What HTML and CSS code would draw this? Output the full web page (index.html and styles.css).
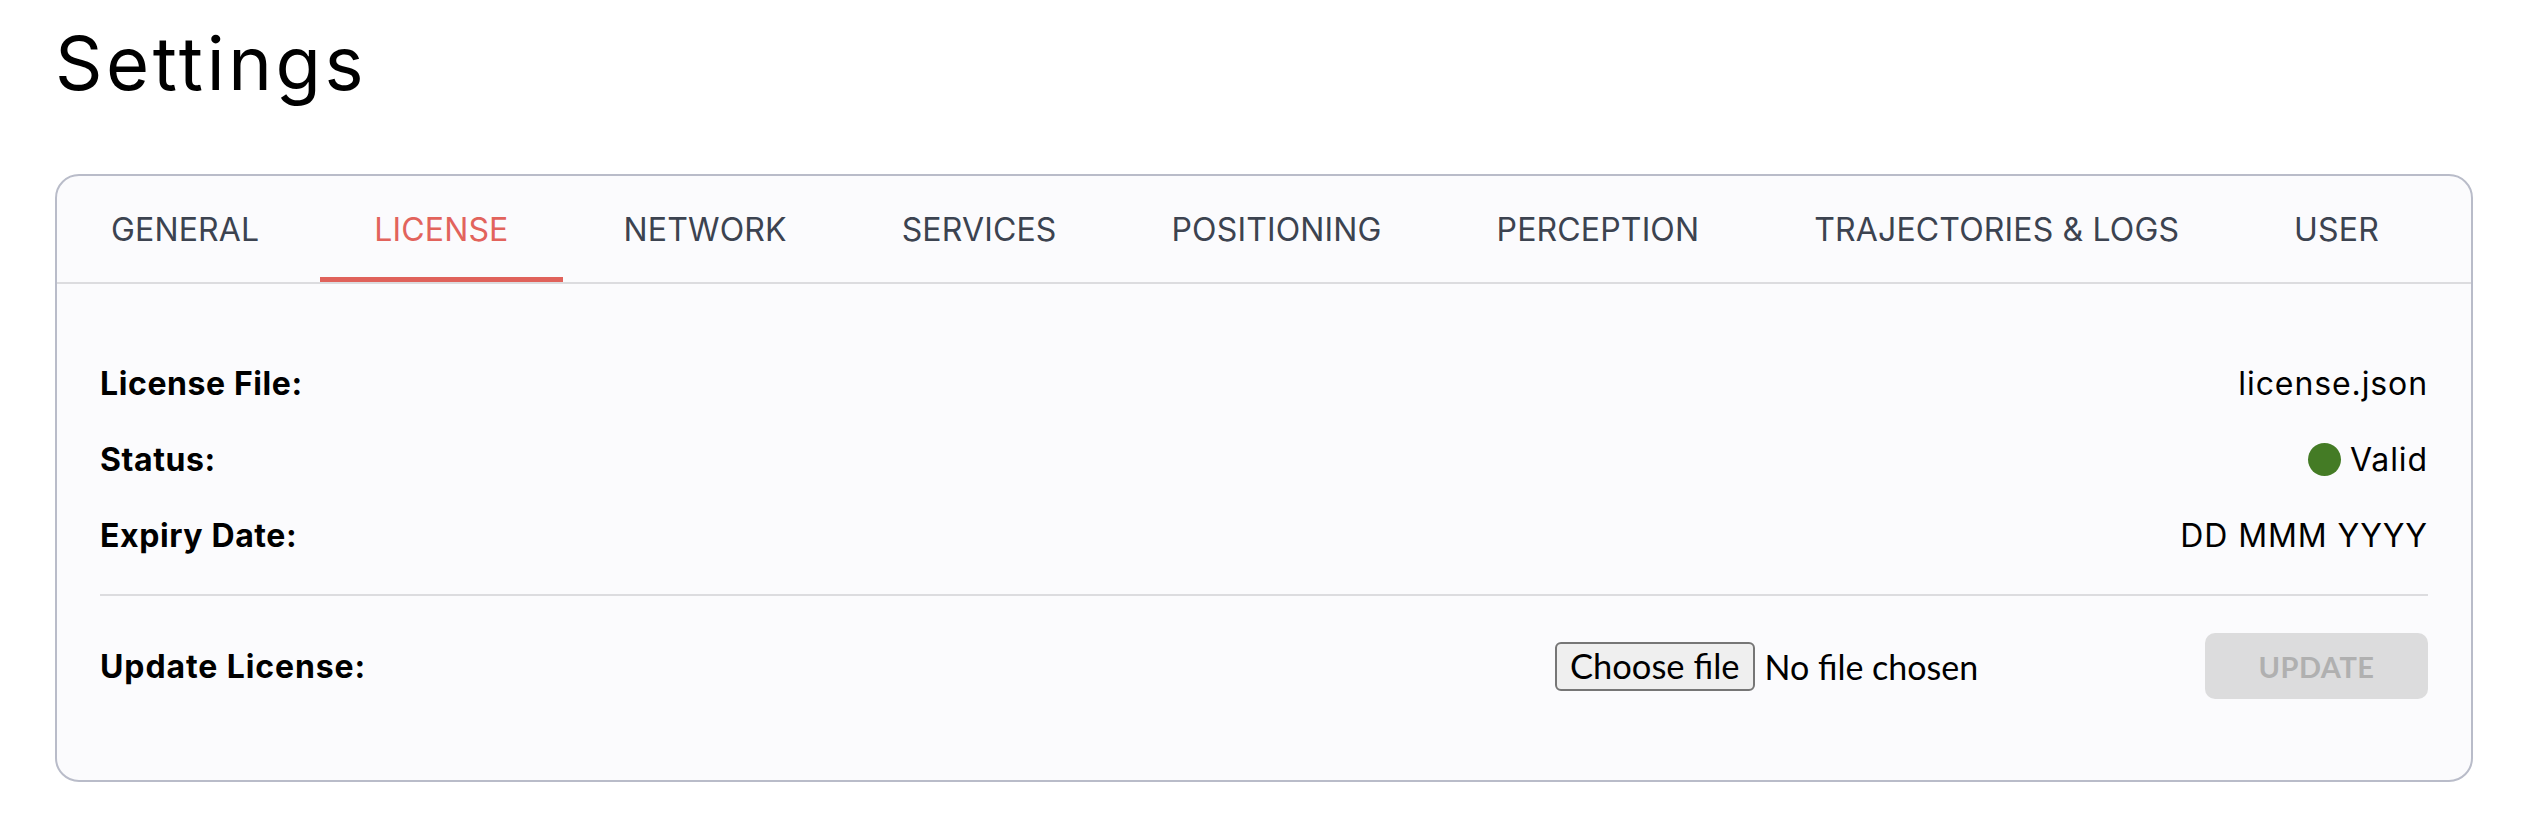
FILE: index.html
```html
<!DOCTYPE html>
<html lang="en">
<head>
<meta charset="utf-8">
<title>Settings</title>
<link rel="stylesheet" href="styles.css">
</head>
<body>
<main class="page">
  <h1 class="page-title">Settings</h1>
  <section class="card">
    <nav class="tabs">
      <div class="tab">GENERAL</div>
      <div class="tab tab-active">LICENSE</div>
      <div class="tab">NETWORK</div>
      <div class="tab">SERVICES</div>
      <div class="tab">POSITIONING</div>
      <div class="tab">PERCEPTION</div>
      <div class="tab">TRAJECTORIES &amp; LOGS</div>
      <div class="tab">USER</div>
    </nav>
    <div class="card-body">
      <div class="row">
        <span class="label">License File:</span>
        <span class="value">license.json</span>
      </div>
      <div class="row">
        <span class="label">Status:</span>
        <span class="value status"><span class="dot"></span>Valid</span>
      </div>
      <div class="row">
        <span class="label">Expiry Date:</span>
        <span class="value">DD MMM YYYY</span>
      </div>
      <hr class="divider">
      <div class="update-row">
        <span class="label update-label">Update License:</span>
        <div class="file-picker">
          <button class="file-button" type="button">Choose file</button>
          <span class="file-name">No file chosen</span>
        </div>
        <button class="update-button" type="button" disabled>UPDATE</button>
      </div>
    </div>
  </section>
</main>
</body>
</html>
```
FILE: styles.css
```css
html, body {
  margin: 0;
  padding: 0;
  background: #ffffff;
}

body {
  font-family: "Inter", "Liberation Sans", sans-serif;
  color: #111111;
}

.page {
  padding: 19px 51px 0 55px;
}

.page-title {
  margin: 0;
  font-size: 74px;
  font-weight: 400;
  line-height: 89px;
  color: #000000;
  letter-spacing: 3.6px;
}

.card {
  margin-top: 66px;
  border: 2px solid #b9bcc9;
  border-radius: 24px;
  background: #fbfbfd;
}

.tabs {
  display: flex;
  gap: 7px;
  height: 106px;
  border-bottom: 2px solid #dcdcdf;
}

.tab {
  position: relative;
  display: flex;
  align-items: center;
  padding: 0 54px;
  font-size: 32px;
  font-weight: 400;
  color: #3c4350;
  white-space: nowrap;
  letter-spacing: 0.15px;
}

.tab-active {
  color: #e2635c;
}

.tab-active::after {
  content: "";
  position: absolute;
  left: 0;
  right: 0;
  bottom: 0;
  height: 5px;
  background: #e0625b;
}

.card-body {
  padding: 61px 43px 81px 43px;
}

.row {
  display: flex;
  justify-content: space-between;
  align-items: center;
  height: 76px;
  font-size: 32px;
}

.label {
  font-weight: 700;
  color: #000000;
  letter-spacing: 0.6px;
}

.update-label {
  flex: 0 0 62.5%;
  letter-spacing: 0.9px;
}

.value {
  font-weight: 400;
  color: #000000;
  letter-spacing: 0.9px;
}

.status {
  display: flex;
  align-items: center;
  gap: 9px;
}

.dot {
  width: 33px;
  height: 33px;
  border-radius: 50%;
  background: #447b25;
}

.divider {
  margin: 21px 0 0 0;
  border: 0;
  height: 2px;
  background: #dcdcdf;
}

.update-row {
  display: flex;
  align-items: center;
  height: 66px;
  margin-top: 37px;
  font-size: 32px;
}

.file-picker {
  flex: 1;
  display: flex;
  align-items: center;
  gap: 10px;
  font-family: "Lato", "Liberation Sans", sans-serif;
  font-size: 34px;
}

.file-button {
  height: 49px;
  padding: 0 13px;
  border: 2px solid #767676;
  border-radius: 6px;
  background: #efefef;
  font-family: "Lato", "Liberation Sans", sans-serif;
  font-size: 34.5px;
  color: #000000;
  line-height: 1;
}

.file-name {
  color: #000000;
}

.update-button {
  width: 223px;
  height: 66px;
  border: 0;
  border-radius: 10px;
  background: #dcdcdd;
  color: #b0b0b0;
  font-family: "Lato", "Liberation Sans", sans-serif;
  font-weight: 700;
  font-size: 29px;
  letter-spacing: 0.5px;
}
```
